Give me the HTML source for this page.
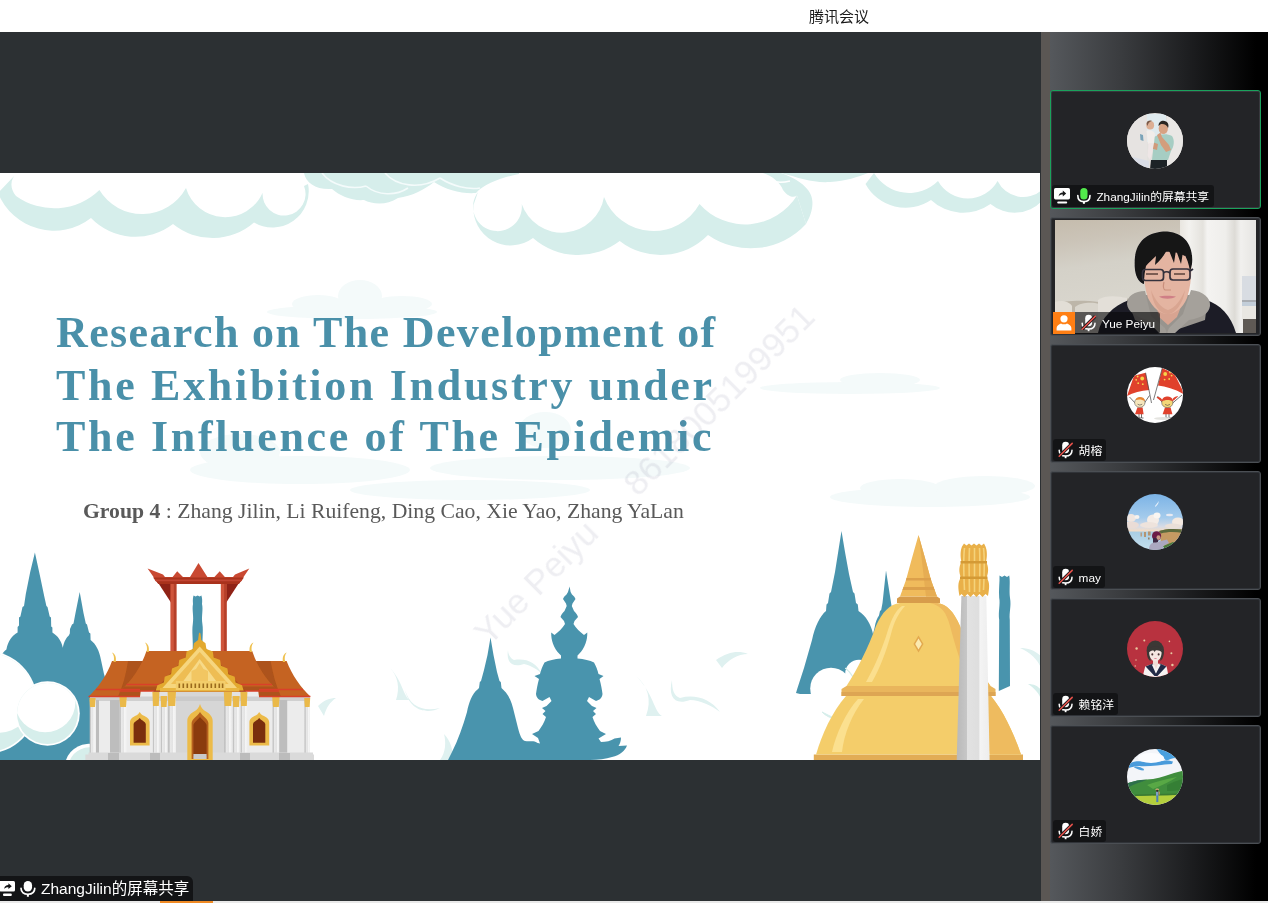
<!DOCTYPE html>
<html lang="zh">
<head>
<meta charset="utf-8">
<title>腾讯会议</title>
<style>
*{margin:0;padding:0;box-sizing:border-box}
.tag,#btag,#apptitle,.tl,#grp{will-change:transform}
html,body{width:1268px;height:903px;overflow:hidden;background:#fff}
body{position:relative;font-family:"Liberation Sans","Noto Sans CJK SC",sans-serif}
#topbar{position:absolute;left:0;top:0;width:1268px;height:32px;background:#fff}
#apptitle{position:absolute;left:809px;top:6.5px;font-size:15px;line-height:20px;color:#1a1a1a;white-space:nowrap;font-family:"Liberation Sans","Noto Sans CJK SC",sans-serif}
#main{position:absolute;left:0;top:32px;width:1041px;height:869px;background:#2c3033}
#slide{position:absolute;left:0;top:173px;width:1040px;height:587px;background:#fff;overflow:hidden}
#slide svg{position:absolute;left:0;top:0}
.tl{position:absolute;left:56px;white-space:nowrap;font-family:"Liberation Serif",serif;font-weight:bold;font-size:44px;line-height:50px;color:#4a90a9}
#t1{top:135.3px;letter-spacing:1.38px}
#t2{top:187.5px;letter-spacing:2.69px}
#t3{top:239.2px;letter-spacing:2.66px}
#grp{position:absolute;left:82.5px;top:325px;white-space:nowrap;font-family:"Liberation Serif",serif;font-size:21.7px;line-height:26px;color:#595959}
#grp b{font-weight:bold}
#wm{position:absolute;left:644px;top:301px;white-space:nowrap;font-size:35px;line-height:35px;color:rgba(120,120,155,.13);transform:translate(-50%,-50%) rotate(-45deg);font-family:"Liberation Sans",sans-serif;z-index:5}
#wm span{display:inline-block;width:53px}
#side{position:absolute;left:1041px;top:32px;width:227px;height:869px;background:linear-gradient(90deg,#55585c 0px,#55585c 9px,#3a3c3f 80px,#1c1d1f 150px,#000 215px)}
#strip{position:absolute;left:1041px;top:32px;width:9px;height:869px;background:#5b5754}
.tile{position:absolute;left:1050px;width:211px;height:119px;background:#232427;border:1px solid #4b4f54;border-radius:3px;overflow:hidden;box-shadow:inset 0 0 0 1px #303338}
.tile.act{border-color:#1aa25c;box-shadow:inset 0 0 0 1px #38373d}
.av{position:absolute;left:76px;top:22px;width:56px;height:56px;border-radius:50%;overflow:hidden}
.av svg{display:block}
.tag{position:absolute;left:2px;bottom:1px;height:22px;background:#131416;border-radius:3px;color:#fff;font-size:11.8px;line-height:24.6px;white-space:nowrap;padding:0 4px 0 25.6px;font-family:"Liberation Sans","Noto Sans CJK SC",sans-serif}
.tag svg{position:absolute;left:5px;top:2px}
#vid{position:absolute;left:4px;top:2px;width:201px;height:113px;overflow:hidden;background:#cfc8bb}
#vid svg{display:block}
#host{position:absolute;left:2px;top:94px;width:22px;height:22px}
#host svg{display:block}
#btag{position:absolute;left:0;top:876px;height:25px;width:193px;background:#131416;border-radius:0 6px 0 0;color:#fff;font-size:15.5px;line-height:26.4px;white-space:nowrap;padding-left:41px;overflow:hidden;font-family:"Liberation Sans","Noto Sans CJK SC",sans-serif}
#btag svg{position:absolute}
#bot{position:absolute;left:0;top:901px;width:1268px;height:2px;background:#e9e9e9}
#bot i{position:absolute;left:160px;top:0;width:53px;height:2px;background:#f08a24}
</style>
</head>
<body>
<div id="topbar"><div id="apptitle">腾讯会议</div></div>
<div id="main"></div>
<div id="slide">
<svg id="art" width="1041" height="587" viewBox="0 173 1041 587">
<defs>
<filter id="soft"><feGaussianBlur stdDeviation="0.5"/></filter>
<linearGradient id="gcol" x1="0" y1="0" x2="1" y2="0"><stop offset="0" stop-color="#bdbdbd"/><stop offset=".22" stop-color="#cfcfcf"/><stop offset=".24" stop-color="#e9e9e9"/><stop offset=".62" stop-color="#e3e3e3"/><stop offset=".64" stop-color="#f6f6f6"/><stop offset="1" stop-color="#f0f0f0"/></linearGradient>
</defs>
<g filter="url(#soft)">
<!-- faint mid clouds -->
<g fill="#f4fafa">
<ellipse cx="352" cy="312" rx="85" ry="7"/><ellipse cx="360" cy="296" rx="22" ry="16"/><ellipse cx="318" cy="304" rx="26" ry="9"/><ellipse cx="402" cy="304" rx="30" ry="8"/>
<ellipse cx="300" cy="470" rx="110" ry="14"/><ellipse cx="240" cy="452" rx="40" ry="18"/><ellipse cx="560" cy="468" rx="130" ry="12"/><ellipse cx="545" cy="430" rx="26" ry="18"/><ellipse cx="470" cy="490" rx="120" ry="10"/>
<ellipse cx="930" cy="497" rx="100" ry="10"/><ellipse cx="900" cy="488" rx="40" ry="9"/><ellipse cx="985" cy="486" rx="50" ry="10"/>
<ellipse cx="850" cy="388" rx="90" ry="6"/><ellipse cx="880" cy="380" rx="40" ry="7"/>
</g>
<!-- cloud B thin -->
<path d="M304 173 C306 183 316 190 332 189 C340 196 352 201 364 200 C372 204 386 206 398 198 C412 196 424 190 434 182 C446 190 462 194 476 193 C484 184 500 178 519 174 L519 173 Z" fill="#d6eeeb"/>
<path d="M322 173 C332 186 352 190 366 186 M366 186 C378 196 396 196 408 188 M385 173 C396 186 420 190 440 178 M440 178 C452 186 468 190 480 188" fill="none" stroke="#f4fbfb" stroke-width="1.6"/>
<!-- top scalloped clouds -->
<path d="M17 173C10 179 9.5 188 16 196A65 65 0 0 0 99.4 190.0A50.0 50.0 0 0 0 186.0 188.0A40.9 40.9 0 0 0 262.6 192.7A21.5 21.5 0 1 0 304.0 186.0L308.0 184.0A36.3 36.3 0 0 1 254.0 222.5A62.8 62.8 0 0 1 173.0 224.0A61.7 61.7 0 0 1 91.0 218.0A60.4 60.4 0 0 1 -2.0 193.0Z" fill="#d6eeeb"/>
<path d="M478.0 192.0A24.4 24.4 0 1 0 521.7 204.0A42.6 42.6 0 0 0 604.0 197.0A52.9 52.9 0 0 0 699.5 204.0A61.1 61.1 0 0 0 797.0 195.5L806.0 224.0A75.0 75.0 0 0 1 708.0 235.0A66.4 66.4 0 0 1 619.7 241.0A68.4 68.4 0 0 1 533.0 238.0A37.3 37.3 0 0 1 473.5 205.0Z" fill="#d6eeeb"/>
<path d="M874.0 173.0A40.9 40.9 0 0 0 938.0 181.0A34.2 34.2 0 0 0 997.6 181.0A28.5 28.5 0 0 0 1042.0 190.0L1042.0 201.0A38.0 38.0 0 0 1 990.5 204.0A46.9 46.9 0 0 1 931.0 200.0A45.5 45.5 0 0 1 865.5 184.0Z" fill="#d6eeeb"/>
<!-- cloud C curl -->
<path d="M763 173 C772 176 780 182 783 190 C790 200 797 196 797 195.500 L806 224 C812 214 816 200 808 190 C802 182 792 177 781 173 Z" fill="#d6eeeb"/>
<path d="M781 173 C800 178 812 183 830 182 C846 181 858 177 868 173 Z" fill="#d6eeeb"/>
<path d="M770 180 C776 183 782 183 790 181" fill="none" stroke="#fff" stroke-width="1.6"/>
</g>
<g filter="url(#soft)">
<!-- faint swooshes -->
<g fill="#dff1f0">
<path d="M318 706 C324 700 330 698 336 698 C330 702 326 708 324 716 Z"/>
<path d="M390 668 C398 676 400 688 396 700 L410 700 C404 698 402 680 390 668Z"/>
<path d="M405 690 C410 706 422 712 440 708 C428 714 410 712 405 690Z"/>
<path d="M636 676 C648 686 652 700 646 716 L662 716 C654 712 654 694 636 676Z"/>
<path d="M672 680 C668 696 674 706 690 700 C700 700 712 706 720 712 C710 698 694 694 680 698 C674 696 672 690 672 680Z"/>
<path d="M716 660 C728 652 738 650 748 654 C738 654 728 660 722 668Z"/>
<path d="M508 650 C506 662 512 668 524 664 C532 666 538 670 542 674 C536 662 526 658 514 660 C510 658 508 654 508 650Z"/>
<path d="M0 690 C4 700 4 712 0 722Z"/>
<path d="M444 734 C450 740 454 750 452 760 L440 760 C446 752 446 742 444 734Z"/>
<path d="M1020 648 C1030 652 1038 660 1041 668 L1041 656 C1034 650 1028 648 1020 648Z"/>
</g>
<!-- LEFT blue spires -->
<path d="M34.9 552.5 L39.8 575 L44.4 597 L46.4 606 L47.5 607 L49.7 616.5 L51 617.5 L51.2 626.500 L52.400 627.500 L52.4 632.500 C58 636 61.500 641 62.800 647.800 C64 641 67 637 68.800 635.500 L69.800 633.500 L70 629 L72 624.500 L73.500 623.500 L75.500 613 L79.700 592 L83.500 613 L85.800 623.500 L87 624.500 L89 632.500 L90.400 633.500 L90.600 640 C96 644 99.500 651 101 660 L104 674 L112 700 L120 760 L-2 760 L-2 664 C0 657 3 652 6.400 649.500 C8 641 12 635.500 17.600 632.500 L17.600 627 L19 625.500 L19 617.500 L20.400 616.500 L22.500 607 L24 606 L25.8 594 L30.2 572 Z" fill="#4a94ad"/>
<!-- bottom-left white cloud -->
<g>
<clipPath id="cc1"><circle cx="-14.3" cy="702.4" r="50"/></clipPath>
<clipPath id="cc2"><circle cx="47.5" cy="713.5" r="30.5"/></clipPath>
<circle cx="-14.3" cy="702.4" r="51.6" fill="#fff"/>
<circle cx="-14.3" cy="702.4" r="50" fill="#d6eeeb"/>
<circle cx="-2.8" cy="695.5" r="37.5" fill="#fff" clip-path="url(#cc1)"/><rect x="-2" y="640" width="44" height="62" fill="#fff" clip-path="url(#cc1)"/>
<circle cx="47.5" cy="713.5" r="32.3" fill="#fff"/>
<circle cx="47.5" cy="713.5" r="30.5" fill="#d6eeeb"/>
<circle cx="45.2" cy="702.1" r="30.2" fill="#fff" clip-path="url(#cc2)"/>
<path d="M66 760 A24 24 0 0 1 96 745 L96 760Z" fill="#fff"/>
<path d="M70 760 A21 21 0 0 1 96 748.5 L96 760Z" fill="#d6eeeb"/>
</g>
</g>
<g filter="url(#soft)">
<!-- giant swing -->
<g>
<path d="M192.6 652 C193.4 640 191.6 632 192.8 624 C194 616 191.8 610 193 604 C192.6 600 193 597 193.6 595.6 L195.6 596.4 L197.6 595.6 L199.6 596.4 L201.4 595.6 C202.2 598 202.4 601 202 604 C203.4 610 201.2 616 202.4 624 C203.600 632 201.8 640 202.8 652 Z" fill="#4a94ad"/>
<path d="M158.6 583.5 H171.6 V603.5 Z" fill="#8f2013"/>
<path d="M238.6 583.5 H225.6 V603.5 Z" fill="#8f2013"/>
<rect x="170.4" y="583" width="6" height="68" fill="#cf553b"/>
<rect x="173.8" y="583" width="2.6" height="68" fill="#b5402a"/>
<rect x="220.8" y="583" width="5.8" height="68" fill="#cf553b"/>
<rect x="224.2" y="583" width="2.4" height="68" fill="#b5402a"/>
<path d="M147.600 568.400 L163 574.500 L165 577 L172.600 577 L177.200 571.300 L183 577 L190 577 L198.500 563 L207.400 577 L214.400 577 L219.700 571.300 L224.900 577 L233 577 L235 574.500 L249.300 568.400 L238.800 584 H158.400 Z" fill="#c94a33"/>
<path d="M153 577.500 H244 L238.800 584 H158.400 Z" fill="#a9321f"/>
<path d="M154.500 579.600 H242.500 L241.300 581.200 H155.600Z" fill="#c24530"/>
</g>
<!-- temple walls -->
<g>
<rect x="90" y="696" width="220" height="58" fill="#ececec"/><rect x="121" y="690" width="158" height="10" fill="#ececec"/>
<rect x="155" y="690" width="90" height="64" fill="#e2e2e2"/>
<rect x="176" y="692" width="48" height="62" fill="#d6d6d6"/>
<!-- shadows under roof -->
<rect x="90" y="696.5" width="220" height="4.5" fill="#c4c4c4" opacity=".7"/>
<!-- pillars -->
<g fill="url(#gcol)">
<rect x="89.7" y="700" width="6" height="54"/><rect x="119.7" y="700" width="7" height="54"/>
<rect x="152.9" y="698" width="6.4" height="56"/><rect x="161" y="698" width="6" height="56"/><rect x="168" y="698" width="7.8" height="56"/>
<rect x="224" y="698" width="7.6" height="56"/><rect x="233" y="698" width="6.4" height="56"/><rect x="240.8" y="698" width="6.4" height="56"/>
<rect x="272.6" y="700" width="6.6" height="54"/><rect x="304.5" y="700" width="5.4" height="54"/>
</g>
<g fill="#bdbdbd"><rect x="110" y="700" width="9.7" height="54"/><rect x="279.2" y="700" width="8" height="54"/><rect x="96" y="700" width="3" height="54"/></g>
<!-- gold capitals -->
<g fill="#eab94a">
<path d="M89.4 698 h6.2 l-.6 9 h-5z"/><path d="M119.4 697 h7.4 l-.8 10 h-5.8z"/><path d="M152.4 692 h7 l-.6 14 h-5.8z"/><path d="M160.6 696 h6.6 l-.6 11 h-5.400z"/><path d="M167.600 692 h8.400 l-.8 14 h-6.800z"/>
<path d="M223.800 692 h8.200 l-.8 14 h-6.600z"/><path d="M232.600 696 h7 l-.6 11 h-5.800z"/><path d="M240.400 692 h7 l-.6 14 h-5.800z"/><path d="M272.200 697 h7.400 l-.8 10 h-5.800z"/><path d="M304.200 698 h6 l-.6 9 h-4.800z"/>
</g>
<!-- plinth -->
<path d="M85.400 760 V754.500 H88.500 V752.500 H313 V754.500 H314 V760 Z" fill="#dadada"/>
<path d="M108 760 V753 H119 V760Z M150 760 V753 H160 V760Z M240 760 V753 H250 V760Z M279 760 V753 H290 V760Z" fill="#bcbcbc"/>
<!-- windows -->
<g>
<path d="M130 745.500 V722 C130 719 133 717 135 716 C137.500 715 139 713.500 139.700 712 C140.400 713.500 142 715 144.500 716 C146.500 717 149.600 719 149.600 722 V745.500 Z" fill="#ecbb4a"/>
<path d="M133.600 742.800 V724 C134 721.500 138 720.500 139.700 718 C141.400 720.500 145.400 721.500 145.800 724 V742.800 Z" fill="#7a2f10"/>
<path d="M249.400 745.500 V722 C249.400 719 252.400 717 254.400 716 C257 715 258.500 713.500 259.200 712 C259.900 713.500 261.400 715 264 716 C266 717 269.200 719 269.200 722 V745.500 Z" fill="#ecbb4a"/>
<path d="M253 742.800 V724 C253.400 721.500 257.500 720.500 259.200 718 C260.900 720.500 264.900 721.500 265.300 724 V742.800 Z" fill="#7a2f10"/>
</g>
<!-- door -->
<path d="M187.300 760 V721 C187.300 716.500 191 713 194 711.500 C197 710 199 707.500 200 704 C201 707.500 203 710 206 711.500 C209 713 212.700 716.500 212.700 721 V760 Z" fill="#ecbb4a"/>
<path d="M191.600 759 V723 C192 718.500 197.500 716.500 200 712 C202.500 716.500 208 718.500 208.400 723 V759 Z" fill="#b5611f"/>
<path d="M193.400 756 V725 C194 722 198 720 200 717 C202 720 206 722 206.600 725 V756 Z" fill="#8a3a10"/>
<rect x="193.400" y="754" width="13.200" height="5" fill="#c9c9c9"/>
</g>
<!-- roofs -->
<g>
<!-- left lower roof -->
<path d="M112 661 H143 L140 696.500 H88.600 C98 688 107 675 112 661Z" fill="#c56323"/>
<path d="M286.600 661 H256 L259 696.500 H310.400 C301 688 292 675 286.600 661Z" fill="#c56323"/>
<path d="M128 661 H143 L140 696.500 H118 C123 686 126 674 128 661Z" fill="#ad531a"/>
<path d="M270.600 661 H256 L259 696.500 H281 C276 686 273 674 270.600 661Z" fill="#ad531a"/>
<!-- center upper roof -->
<path d="M146.500 651 H252.200 C257 666 266 680 278.500 691 H120 C132.500 680 141.500 666 146.500 651Z" fill="#c56323"/>
<path d="M120 691 L124.500 686.500 H274 L278.500 691Z" fill="#ad531a"/>
<g stroke="#d9402a" stroke-width="1.300" fill="none">
<path d="M126.500 684.500 H272"/><path d="M119.500 691 H279"/><path d="M88.600 696.500 H140"/><path d="M259 696.500 H310.400"/><path d="M96 689.500 H140"/><path d="M259 689.500 H303"/>
</g>
<!-- finials -->
<g fill="#efc14f">
<path d="M146.500 652 C147.500 648 147 645 145 642.500 C148 643.500 149.500 647 148.800 652Z"/>
<path d="M252 652 C251 648 251.500 645 253.500 642.500 C250.500 643.500 249 647 249.700 652Z"/>
<path d="M113.500 662 C114.500 658 114 655 112 652.500 C115 653.500 116.500 657 115.800 662Z"/>
<path d="M285.200 662 C284.200 658 284.700 655 286.700 652.500 C283.700 653.500 282.200 657 282.900 662Z"/>
</g>
<!-- center gable -->
<path d="M199.700 641.500 L246.500 692 H153 Z" fill="#9c4a14" opacity=".55"/>
<path d="M199.7 632.5 L200.5 633.5 L201.3 640.0 L205.5 643.2 L206.4 649.0 L212.8 651.6 L213.7 657.4 L220.1 660.0 L221.0 665.8 L227.4 668.4 L228.3 674.2 L234.7 676.8 L235.5 682.6 L242.0 685.2 L243.6 690.6 L155.8 690.6 L157.4 685.2 L163.9 682.6 L164.7 676.8 L171.1 674.2 L172.0 668.4 L178.4 665.8 L179.3 660.0 L185.7 657.4 L186.6 651.6 L193.0 649.0 L193.9 643.2 L198.1 640.0 L198.9 633.5Z" fill="#e3a92f"/>
<path d="M199.700 646.500 L237.500 688.500 H162 Z" fill="#f6d67e"/>
<path d="M199.700 652 L228.500 684 H171 Z" fill="#eebd52"/>
<path d="M199.700 659 L216.500 681.500 H183 Z" fill="#f7da88"/>
<path d="M199.700 663 L203.500 669 L208 671 L208 681.500 H191.500 V671 L196 669 Z" fill="#f2c662"/>
<rect x="160" y="688" width="79.400" height="3.600" fill="#e9b640"/>
<rect x="175.800" y="681" width="49.700" height="9" fill="#f3cd6a"/>
<g fill="#9a6a1c"><rect x="178.500" y="683.500" width="1.600" height="4.500"/><rect x="182.500" y="683.500" width="1.600" height="4.500"/><rect x="186.500" y="683.500" width="1.600" height="4.500"/><rect x="190.500" y="683.500" width="1.600" height="4.500"/><rect x="194.500" y="683.500" width="1.600" height="4.500"/><rect x="198.500" y="683.500" width="1.600" height="4.500"/><rect x="202.500" y="683.500" width="1.600" height="4.500"/><rect x="206.500" y="683.500" width="1.600" height="4.500"/><rect x="210.500" y="683.500" width="1.600" height="4.500"/><rect x="214.500" y="683.500" width="1.600" height="4.500"/><rect x="218.500" y="683.500" width="1.600" height="4.500"/><rect x="221.800" y="683.500" width="1.600" height="4.500"/></g>
</g>
</g>
<defs>
<linearGradient id="gcol2" x1="0" y1="0" x2="1" y2="0"><stop offset="0" stop-color="#b9b9b9"/><stop offset=".3" stop-color="#c6c6c6"/><stop offset=".32" stop-color="#e2e2e2"/><stop offset=".68" stop-color="#dedede"/><stop offset=".7" stop-color="#f4f4f4"/><stop offset="1" stop-color="#ededed"/></linearGradient>
</defs>
<g filter="url(#soft)">
<!-- middle spire + figure -->
<path d="M490.500 637.500 L493.500 655 L497 672 L499.500 681 L500.800 682 L501.500 688 L503 689.500 C508 694 511 700 513 708 L518 728 C520 736 522 740 525 741 C530 742 534 740 537 743 L540 746 L534 760 L448 760 L452 752 C458 740 463 726 467 712 C469 702 472 694 477.500 689.500 L479 688 L479.800 682 L481 681 L484 670 L487.500 655 Z" fill="#4a94ad"/>
<path d="M569.600 586.500 L570.600 592 L572 594.500 C574 596 575 597.500 575.500 599 L572.500 603.500 L571.800 606 L574 611 C576 613 577.500 615 578 617 L574.500 621 L573.500 624 C576 628 580 632 584 635 L587.300 632.500 C587.500 640 585 648 579 654 L577.500 655.500 L577.500 658.500 C584 659 590 660.500 594 662.500 C596 666 597.500 670 598.500 674 L603.500 676 L599.500 679 C601 684 602 690 602.500 694 C602 698 599.500 700 596 701 L589 697 L587 701 L592 706 L596.500 708 L593 711 L596 714 L592.500 717 C594 722 597 727 600 731 L606 734 L598.500 738.500 L601 742 C606 742 611 741 614.500 738.500 L621 737.500 C621 741 620 744 618.500 746 L627 745.500 C625 751 620 755 612 757 C606 759 598 760 590 760 L540 760 L536 752 C534 748 533.500 745 534 742 L540 743.500 L538 738 L532 734 L538.500 731 C541.500 727 544.500 722 546 717 L542.500 714 L545.500 711 L542 708 L546.500 706 L551.500 701 L549.500 697 L542.500 701 C539 700 536.500 698 536 694 C536.500 690 537.500 684 539 679 L534.500 676 L540 674 C541 670 542.500 666 544.500 662.500 C548.500 660.500 554.500 659 561 658.500 L561 655.500 L559.500 654 C553.500 648 551 640 551.200 632.500 L554.500 635 C558.500 632 562.500 628 565 624 L564 621 L560.500 617 C561 615 562.500 613 564.500 611 L566.700 606 L566 603.500 L563 599 C563.500 597.500 564.500 596 566.500 594.500 L568 592 Z" fill="#4a94ad"/>
<rect x="518" y="746" width="30" height="14" fill="#4a94ad"/>
<!-- right blue spires -->
<path d="M841.500 531 L845 552 L849 574 L853 592 L854.500 593.500 L856 603 L857.800 604.500 L858.500 611 C866 616 871 624 873 634 L874.500 628 C875.500 622 877 618 879 615.500 L880 611 L881.200 610 L882.500 603 L886 570.500 L890 596 L892 609 L893.500 610.500 L894.500 616 C900 620 903 626 905 634 L915 700 L870 700 L800 694 L796 693 L797.500 688 L804 668 L812 640 C815 626 820 616 826 611 L826.500 604.500 L828 603 L829.500 593.500 L831 592 L835 572 Z" fill="#4a94ad"/>
<!-- blue pillar right -->
<path d="M999.500 575.500 L1002 577 L1004.500 575.500 L1007 577 L1009.200 575.500 C1010.500 582 1009 590 1010 598 C1011.500 606 1009 612 1009.800 620 L1010 686 L998.800 691 L999.200 620 C998 612 1000.500 604 999.200 598 C998.500 590 999.800 582 999.500 575.500Z" fill="#4a94ad"/>
<!-- clouds at stupa foot -->
<circle cx="831" cy="688.5" r="20.8" fill="#fff"/><circle cx="859" cy="673.5" r="13.8" fill="#fff"/><rect x="796" y="694" width="90" height="30" fill="#fff"/>
<path d="M845 668 C850 672 854 678 856 684 C853 676 850 671 845 668Z" fill="#d6eeeb" stroke="#d6eeeb" stroke-width="1"/>
<path d="M822 712 C826 716 830 718 836 719 C830 716 826 714 822 712Z" fill="#d6eeeb" stroke="#d6eeeb" stroke-width="1"/>
<circle cx="1030" cy="715" r="32" fill="#fff"/>
<path d="M1028 684 C1034 688 1040 694 1041 700 L1041 690 C1038 686 1034 684 1028 684Z" fill="#d6eeeb"/>
<!-- stupa -->
<g>
<path d="M813.800 760 V754.500 H1023 V760Z" fill="#e2ac55"/>
<path d="M816 754.500 C822 734 832 712 846 696 H991 C1004 712 1014 734 1021 754.500Z" fill="#f4cd6b"/>
<path d="M962 696 H991 C1004 712 1014 734 1021 754.500 H990 C986 734 976 712 962 696Z" fill="#eebb5e"/>
<path d="M832 752 C836 734 846 712 858 699 L864 699 C852 714 844 734 842 752Z" fill="#fbe08f"/>
<path d="M841.500 696 V689 L846.500 686 H990.500 L995.500 689 V696Z" fill="#e9b55c"/>
<path d="M841.500 692 H995.500 V696 H841.500Z" fill="#dda552"/>
<path d="M846.500 686 C858 668 868 648 876 626 C882 612 890 604 900 603 H937 C947 604 954 612 960 626 C968 648 978 668 990.500 686Z" fill="#f4cd6b"/>
<path d="M937 603 C947 604 954 612 960 626 C968 648 978 668 990.500 686 H970 C962 668 956 648 950 626 C946 612 942 606 930 603Z" fill="#eeba5e"/>
<path d="M866 682 C874 668 882 650 888 630 C892 618 896 610 902 606 L905 606 C898 614 894 622 891 634 C886 652 880 668 872 682Z" fill="#fbdf8e"/>
<path d="M897 603 V598.500 L900 596.500 H937 L940 598.500 V603Z" fill="#d79c4c"/>
<path d="M900 596.500 L906 580 L912 558 L918.500 535 L925 558 L931 580 L937 596.500Z" fill="#f0bb5c"/>
<path d="M918.500 535 L925 558 L931 580 L937 596.500 H926 C924 580 922 558 918.500 535Z" fill="#e6ad52"/>
<path d="M903.500 587 H933.500 L934.500 590 H902.500Z M906.500 578 H930.500 L931.300 580.500 H905.800Z" fill="#dca04c"/>
<path d="M918.500 635.500 L923.500 644 L918.500 652.500 L913.500 644Z" fill="#e2a94f"/>
<path d="M918.500 638.500 L921.800 644 L918.500 649.500 L915.200 644Z" fill="#fbeab0"/>
</g>
<!-- column -->
<g>
<path d="M961.400 596 H986.300 L989.600 760 H956.700Z" fill="url(#gcol2)"/>
<path d="M959.500 596 C958 588 957.500 582 961 577.500 C958.500 572 959 566 961.500 562 C960 556 960.500 550 962 546.500 L964 543.500 L966.500 545.500 L969 543.500 L971.500 545.500 L974 543.500 L976.500 545.500 L979 543.500 L981.500 545.500 L984 543.500 L985.500 546.500 C987 550 987.500 556 986 562 C988.500 566 989 572 986.500 577.500 C990 582 989.500 588 988 596 L985.500 594 L982.500 597 L979.500 594 L976.500 597 L973.500 594 L970.500 597 L967.500 594 L964.500 597 L961.500 594Z" fill="#e9b048"/>
<path d="M964.500 548 C963.500 556 963.500 570 964.500 590 M969.500 548 C969 556 969 570 969.500 592 M974.500 548 C974.500 556 974.500 570 974.500 592 M979.500 548 C980 556 980 570 979.500 592 M983.500 548 C984.500 556 984.500 570 983.500 590" stroke="#f5d27a" stroke-width="1.600" fill="none"/>
<path d="M960.500 561 H987 V563.500 H960.500Z M960 576.500 H987.500 V579 H960Z" fill="#d49a36"/>
</g>
</g>

</svg>
<div class="tl" id="t1">Research on The Development of</div>
<div class="tl" id="t2">The Exhibition Industry under</div>
<div class="tl" id="t3">The Influence of The Epidemic</div>
<div id="grp"><b>Group 4</b> : Zhang Jilin, Li Ruifeng, Ding Cao, Xie Yao, Zhang YaLan</div>
<div id="wm">Yue Peiyu<span></span>8618005199951</div>
</div>
<div id="side"></div>
<div id="strip"></div>
<svg width="0" height="0" style="position:absolute">
<defs>
<g id="micoff">
<rect x="4.2" y="0.8" width="6.9" height="11.4" rx="3.45" fill="#fff"/>
<path d="M1.2 9.2 C1.2 13 4 15 7.6 15 C11.2 15 14 13 14 9.2" fill="none" stroke="#fff" stroke-width="1.5" stroke-linecap="round"/>
<path d="M7.6 15 V17.2" stroke="#fff" stroke-width="1.8"/>
<path d="M1.2 15.2 L14.2 2.4" stroke="#17181a" stroke-width="3.2"/>
<path d="M1.2 15.2 L14.2 2.4" stroke="#e8524b" stroke-width="1.5" stroke-linecap="round"/>
</g>
<g id="micon">
<rect x="3.3" y="0" width="7.2" height="11.6" rx="3.6" fill="#52e94c"/>
<path d="M0.8 7.5 C0.8 12 3.5 13.6 6.9 13.6 C10.3 13.6 13 12 13 7.5" fill="none" stroke="#fff" stroke-width="1.6" stroke-linecap="round"/>
<path d="M6.9 13.6 V15.8" stroke="#fff" stroke-width="2"/>
</g>
<g id="share">
<rect x="0" y="0" width="16" height="11.4" rx="1.6" fill="#fff"/>
<rect x="3.2" y="13.4" width="10" height="2.1" rx="1" fill="#fff"/>
<path d="M4.6 8.6 C4.8 5.6 6.6 4.5 8.8 4.5 V2.6 L12.2 5.6 L8.8 8.4 V6.6 C7 6.5 5.6 7 4.6 8.6Z" fill="#17181a"/>
</g>
</defs>
</svg>

<!-- tile 1 -->
<div class="tile act" style="top:90px">
<div class="av"><svg width="56" height="56" viewBox="0 0 56 56">
<defs><filter id="b1"><feGaussianBlur stdDeviation="0.75"/></filter></defs>
<rect width="56" height="56" fill="#e3e1de"/>
<g filter="url(#b1)">
<rect x="20" y="1" width="19" height="28" fill="#dfeaee"/>
<rect x="0" y="0" width="20" height="56" fill="#e6e3e1"/>
<rect x="40" y="0" width="16" height="56" fill="#e9e7e5"/>
<path d="M13 21 l3 1 l0.5 6 l-3 -1z" fill="#7aa3b8"/>
<path d="M6 44 L22 48 L22 56 L4 56Z" fill="#d9dde6"/>
<!-- man -->
<path d="M27 24 C31 21 40 20 45 23 C48 27 47 34 44 38 L41 47 L25 47 L26 38 Z" fill="#a6cdc3"/>
<path d="M24 47 H40 V56 H23 Z" fill="#1f2226"/>
<ellipse cx="36.3" cy="15.5" rx="4.6" ry="5.6" fill="#d7a283"/>
<path d="M31.5 13 C31.5 8 36 7 39 8.5 C41.5 9.5 42 13 41 15 C40 12 37 10.5 34 11 Z" fill="#2b2521"/>
<path d="M30 22 L33.5 19.5 L35 24 L42 32 L44 37 L39 39 L34 32 Z" fill="#d39d7c"/>
<path d="M22 28 L31 31 L30 37 L23 35Z" fill="#d09a7a"/>
<!-- baby -->
<ellipse cx="23.2" cy="12.2" rx="3.9" ry="4.2" fill="#dcae93"/>
<path d="M19.6 11 C19.6 7.5 23 7 25 8 C23 8.6 21 10 20.4 13Z" fill="#7a5a48"/>
<path d="M19.5 18 C22 16.5 27 17.5 28 21 L27 30 L21 31 Z" fill="#f1edea"/>
<path d="M21.5 30 L27 30 L25 41 L23 47 L20.5 43 Z" fill="#eee6e6"/>
</g>
</svg></div>
<div class="tag t1" style="left:1px;bottom:1px;padding-left:44.4px;padding-right:5px"><svg width="16" height="16" viewBox="0 0 16 16" style="left:2px;top:3px"><use href="#share"/></svg><svg width="14" height="16" viewBox="0 0 14 16" style="left:24.6px;top:3px"><use href="#micon"/></svg>ZhangJilin的屏幕共享</div>
</div>

<!-- tile 2 : video -->
<div class="tile" style="top:217px">
<div id="vid"><svg width="201" height="113" viewBox="0 0 201 113">
<defs>
<filter id="vb"><feGaussianBlur stdDeviation="0.75"/></filter>
<filter id="vb2"><feGaussianBlur stdDeviation="1.6"/></filter>
<linearGradient id="wall" x1="0" y1="0" x2="0.25" y2="1"><stop offset="0" stop-color="#c5bcad"/><stop offset=".2" stop-color="#cbc4b8"/><stop offset=".42" stop-color="#d4d1c8"/><stop offset="1" stop-color="#dcd9d1"/></linearGradient>
<linearGradient id="curt" x1="0" y1="0" x2="1" y2="0"><stop offset="0" stop-color="#e9e6e0"/><stop offset=".12" stop-color="#f3f2ef"/><stop offset=".3" stop-color="#e4e2dd"/><stop offset=".36" stop-color="#f4f3f1"/><stop offset=".6" stop-color="#efeeeb"/><stop offset=".72" stop-color="#dddbd6"/><stop offset=".8" stop-color="#f1f0ee"/><stop offset="1" stop-color="#e6e5e2"/></linearGradient>
</defs>
<rect width="201" height="113" fill="url(#wall)"/>
<g filter="url(#vb)">
<rect x="125" y="0" width="76" height="113" fill="url(#curt)"/>
<rect x="187" y="56" width="14" height="26" fill="#d8dce2"/>
<rect x="187" y="80" width="14" height="2" fill="#a9adb2"/><rect x="187" y="82" width="14" height="8" fill="#c3ced9"/>
<rect x="187" y="86" width="14" height="14" fill="#e9e7e2"/>
<rect x="188" y="99" width="13" height="14" fill="#5f5a55"/>
<!-- sofa -->
<path d="M0 84 C10 80 30 80 44 82 C52 76 64 76 74 79 V113 H0Z" fill="#bdb6a9"/>
<path d="M0 82 C6 80 14 81 17 86 V113 H0Z" fill="#e2ded6"/>
<path d="M20 87 C26 82 38 82 44 84 V113 H20Z" fill="#d9d5cc"/>
<path d="M43 80 C50 75 62 76 72 78 V113 H43Z" fill="#e3dfd8"/>
<path d="M0 100 H60 V113 H0Z" fill="#cfcac1" opacity=".6"/>
<!-- jacket -->
<path d="M43 113 C46 98 58 86 74 80 L100 96 L112 110 L124 96 L150 80 C166 84 176 96 181 113Z" fill="#1c1d27"/>
<!-- hood -->
<path d="M78 75 L148 75 L152 84 L150 100 L112 113 L80 100 L74 84Z" fill="#98948e"/>
<path d="M72 84 C72 76 80 71 90 71 L96 96 L110 108 L112 113 L104 113 L92 100 C80 96 73 92 72 84Z" fill="#a19d97"/>
<path d="M155 86 C156 78 148 71 136 70 L128 94 L114 108 L112 113 L120 113 L134 100 C146 98 154 94 155 86Z" fill="#a5a19b"/>
<!-- neck -->
<path d="M101 84 H127 L122 97 L113 105 L104 97Z" fill="#d8a491"/>
<!-- face -->
<path d="M89 40 C89 24 100 18 113 18 C126 18 136 24 136 40 C137 52 136 66 132 78 C128 88 120 94 113 94 C105 94 98 88 93 78 C89 66 88 52 89 40Z" fill="#e4b4a1"/>
<path d="M96 70 C100 80 106 88 113 90 C120 88 126 80 130 70 C128 84 120 94 113 94 C105 94 98 86 96 70Z" fill="#d9a591"/>
<!-- hair -->
<path d="M80 50 C78 30 84 14 108 11.5 C128 11 139 24 137 44 L135 52 C134 44 132 38 128 32 L126 44 L121 30 L119 43 L113 28 C110 34 106 40 100 45 L101 36 C97 40 93 43 91 46 C90 50 89 56 89 64 C85 63 81 58 80 50Z" fill="#131316"/>
<path d="M92 30 C100 24 120 22 132 30 L130 36 C120 30 104 30 94 38Z" fill="#131316"/>
<!-- glasses -->
<g fill="none" stroke="#35313c" stroke-width="1.700">
<rect x="87.500" y="49.500" width="21" height="11" rx="3"/><rect x="115" y="49" width="20" height="11" rx="3"/><path d="M108.500 53 C110 51.500 113 51.500 115 53"/>
</g>
<path d="M135 51 L138 49" stroke="#2b2c3a" stroke-width="2"/>
<path d="M91 54 h12 M119 54 h11" stroke="#5a4038" stroke-width="1.400"/>
<!-- nose + mouth -->
<path d="M109 62 C108 66 108 69 110 70 H116" stroke="#c98f7c" stroke-width="1.200" fill="none"/>
<path d="M104 76.500 C108 75.500 116 75.500 121 76.500 C117 79.500 108 79.500 104 76.500Z" fill="#cf7f86"/>
</g>
</svg>
</div>
<div id="host"><svg width="22" height="22" viewBox="0 0 22 22"><rect width="22" height="22" fill="#ff7f14"/><circle cx="11" cy="6.8" r="3.6" fill="#fff"/><path d="M3.6 18.6 V16 C3.6 13.6 6 12 8 11.4 C9.6 12.6 12.4 12.6 14 11.4 C16 12 18.4 13.6 18.4 16 V18.6 Z" fill="#fff"/></svg></div>
<div class="tag" style="left:24px;bottom:1px;background:rgba(10,10,12,.62);border-radius:0 3px 3px 0;padding-left:27px;padding-right:5px"><svg width="16" height="18" viewBox="0 0 16 18" style="left:6px;top:2px"><use href="#micoff"/></svg>Yue Peiyu</div>
</div>

<!-- tile 3 -->
<div class="tile" style="top:344px">
<div class="av"><svg width="56" height="56" viewBox="0 0 56 56">
<rect width="56" height="56" fill="#fff"/>
<path d="M0 29 L7 8.7 L18.6 5.8 L22.2 23 C14 23.5 6 26 0 29Z" fill="#e0412c"/>
<path d="M35.3 1 L47.5 7 L55 22 L56.5 27 C48 22 39 19.5 31 18.5Z" fill="#e0412c"/>
<path d="M18.6 5.8 L24.5 36" stroke="#444" stroke-width=".7" fill="none"/>
<path d="M35.3 1 L26.5 33" stroke="#444" stroke-width=".7" fill="none"/>
<g fill="#f6d44a">
<circle cx="15.2" cy="11.5" r="1.9"/><circle cx="10.6" cy="9.5" r=".9"/><circle cx="9.2" cy="12.8" r=".9"/><circle cx="11.2" cy="16.2" r=".9"/><circle cx="15.8" cy="17.2" r=".9"/>
<circle cx="38.2" cy="7" r="1.9"/><circle cx="43" cy="5.4" r=".9"/><circle cx="44.6" cy="8.6" r=".9"/><circle cx="42.2" cy="12" r=".9"/><circle cx="37.6" cy="12.6" r=".9"/>
</g>
<g stroke="#333" stroke-width=".7" fill="none">
<path d="M10 38 L2.5 30"/><path d="M16 38 L22.5 28.5"/><path d="M36.5 37 L30.5 29"/><path d="M44.5 37 L55 28"/>
<path d="M12 47 V51 h2"/><path d="M14.5 47 V51 h2"/><path d="M39 47 V51 h2"/><path d="M42 47 V51 h2"/>
</g>
<ellipse cx="36" cy="51.5" rx="9" ry="1.4" fill="#e4e4e0"/>
<path d="M10.4 40.6 H15.6 L16.6 47.2 H8 Z" fill="#e0412c"/>
<path d="M38 40.4 H43.6 L45.4 47.2 H35.6 Z" fill="#e0412c"/>
<ellipse cx="12.8" cy="35.6" rx="5.2" ry="4.8" fill="#f6e6bc" stroke="#444" stroke-width=".5"/>
<path d="M8.6 33 C9.5 30 13 29.6 15.5 30.6 C17 31.2 17.8 32.6 18 34 C15 32.4 12 32 8.6 33Z" fill="#e98530"/>
<ellipse cx="40.3" cy="35.8" rx="5.6" ry="4.8" fill="#f3d778" stroke="#444" stroke-width=".5"/>
<path d="M34.6 34.6 C35 30.6 38.6 29.4 41 29.6 C44 29.8 46 31.6 46.2 34.6 C43 32.6 38 32.6 34.6 34.6Z" fill="#e0412c"/>
<path d="M35 32.5 C33 30 31 29.6 29.5 30.5 C31 31.6 33 33.4 34.6 34.2Z" fill="#e0412c"/>
<path d="M45.6 32 C47.5 29.6 49.6 28.8 51.2 29.4 C49.6 30.8 47.6 32.6 46.2 33.8Z" fill="#e0412c"/>
<path d="M10.6 37.2 q2.2 1.8 4.6 0" stroke="#444" stroke-width=".6" fill="none"/>
<path d="M38 37.4 q2.4 2 5 0" stroke="#444" stroke-width=".6" fill="none"/>
</svg></div>
<div class="tag"><svg width="16" height="18" viewBox="0 0 16 18"><use href="#micoff"/></svg>胡榕</div>
</div>

<!-- tile 4 -->
<div class="tile" style="top:471px">
<div class="av"><svg width="56" height="56" viewBox="0 0 56 56">
<defs><linearGradient id="sky4" x1="0" y1="0" x2="0" y2="1"><stop offset="0" stop-color="#7bb3e6"/><stop offset=".42" stop-color="#a4cbec"/><stop offset=".58" stop-color="#d6dbe6"/><stop offset=".66" stop-color="#f3dcc6"/><stop offset=".68" stop-color="#a9cde3"/><stop offset="1" stop-color="#c5e0ee"/></linearGradient>
<filter id="b4"><feGaussianBlur stdDeviation="0.6"/></filter></defs>
<rect width="56" height="56" fill="url(#sky4)"/>
<g filter="url(#b4)">
<ellipse cx="26" cy="26" rx="6" ry="5.5" fill="#f4ece6"/><ellipse cx="30" cy="21.5" rx="3.5" ry="3" fill="#faf6f2"/>
<ellipse cx="22" cy="31" rx="9" ry="3" fill="#eee3dc"/>
<ellipse cx="4" cy="24" rx="5" ry="4" fill="#f0e6e0"/><ellipse cx="10" cy="23" rx="2.5" ry="2" fill="#f7f2ee"/>
<ellipse cx="4" cy="31" rx="8" ry="3.5" fill="#eadcd6"/>
<ellipse cx="51" cy="28" rx="6" ry="4.5" fill="#f4e9e0"/><ellipse cx="46" cy="32" rx="8" ry="2.5" fill="#eadfd8"/>
<ellipse cx="42.5" cy="21" rx="3.5" ry="1.2" fill="#e8eaf2"/>
<path d="M28 12 l4 -5 l-1 3 l-2.4 3z" fill="#e9f1fa"/>
<path d="M32 37 C38 34.5 48 34.5 56 35.5 V52 L40 56 L34 48 Z" fill="#c59a63"/>
<path d="M32 37 C38 34.5 48 34.5 56 35.5 V39 C48 37.5 40 37.5 34 39.5Z" fill="#5b6a3c"/>
<path d="M36 52 L46 48 L52 50 L44 56 H38Z" fill="#4c7a3c"/>
<rect x="13.5" y="38.5" width="1.4" height="4" fill="#b89a7a"/><rect x="17" y="38" width="2" height="5" fill="#b5946f"/><rect x="21" y="37.5" width="2.6" height="4" fill="#b5946f"/><rect x="21" y="43.5" width="1.6" height="2" fill="#9a8066"/>
<ellipse cx="29.6" cy="42" rx="4.6" ry="4.8" fill="#6c1f47"/>
<path d="M26 44 h5 v8 h-5z" fill="#3c2a44"/>
<ellipse cx="31.5" cy="43.6" rx="2" ry="2.4" fill="#c99a86"/>
<path d="M22 56 C22 50 25 48 29 48.5 L34 47 L40 45.5 L42 49 L36 52 V56Z" fill="#aba8c0"/>
</g>
</svg></div>
<div class="tag"><svg width="16" height="18" viewBox="0 0 16 18"><use href="#micoff"/></svg>may</div>
</div>

<!-- tile 5 -->
<div class="tile" style="top:598px">
<div class="av"><svg width="56" height="56" viewBox="0 0 56 56">
<defs><filter id="b5"><feGaussianBlur stdDeviation="0.35"/></filter></defs>
<rect width="56" height="56" fill="#b8323f"/>
<g filter="url(#b5)">
<g fill="#e8c9a0"><circle cx="17.3" cy="19.6" r="1"/><circle cx="9.6" cy="27.5" r="1.2"/><circle cx="42.4" cy="20.4" r=".8"/><circle cx="44.4" cy="32.2" r="1"/><circle cx="9" cy="39" r=".7"/><circle cx="8.2" cy="45" r=".7"/><circle cx="45.4" cy="44" r="1.2"/></g>
<path d="M16.2 53.5 L18.2 45.6 L25.6 42.8 H33.3 L39.6 45.6 L41.2 53.5 L36 56 H22Z" fill="#f6f3f2"/>
<path d="M26 38 h5 v7 l-2.5 3 l-2.5 -3z" fill="#f1ddd6"/>
<path d="M18.6 45.4 L25.8 42.6 L29 52 L33 42.6 L39.4 45.4 L30.5 55 H27.5 Z" fill="#232c47"/>
<path d="M24.8 43.4 L28.9 52.4 L33.8 43.4 Z" fill="#f6f3f2"/><path d="M26.6 42.6 L28.9 48 L31.4 42.6 Z" fill="#f1ddd6"/>
<ellipse cx="28.3" cy="29.6" rx="8.7" ry="10" fill="#3b3735"/>
<path d="M20 30 C19.6 36 21.6 39 23.4 40 L24 34Z" fill="#3b3735"/><path d="M36.8 30 C37 36 35 39 33.4 40 L33 34Z" fill="#3b3735"/>
<path d="M22.2 30.5 C22.2 27.5 34.6 27.5 34.6 30.5 C34.8 36.5 32 40.4 28.4 40.4 C24.8 40.4 22 36.5 22.2 30.5Z" fill="#f5e6e1"/>
<path d="M21.6 31.5 C22 27 25 25.4 28.6 25.4 C32 25.4 34.8 27 35.2 31.5 C33 29.6 31 29 28.6 29.4 L27.6 31 L26.6 29.4 C24.6 29.4 23 30 21.6 31.5Z" fill="#3b3735"/>
<ellipse cx="25.3" cy="33.4" rx="1" ry="1.1" fill="#4a3030"/><ellipse cx="31.6" cy="33.4" rx="1" ry="1.1" fill="#4a3030"/>
<path d="M26.8 37.2 q1.7 1.5 3.4 0z" fill="#d8607a"/>
</g>
</svg></div>
<div class="tag"><svg width="16" height="18" viewBox="0 0 16 18"><use href="#micoff"/></svg>赖铭洋</div>
</div>

<!-- tile 6 -->
<div class="tile" style="top:725px">
<div class="av" style="top:22.5px"><svg width="56" height="56" viewBox="0 0 56 56">
<defs><filter id="b6"><feGaussianBlur stdDeviation="0.7"/></filter></defs>
<rect width="56" height="56" fill="#f3f5f9"/>
<g filter="url(#b6)">
<path d="M29 -1 L50 -1 L50 9 C46 8.5 42 11 39 11.5 C36 8 32 4 29 -1Z" fill="#4aa0de"/>
<path d="M2 14.5 C8 11.6 14 12 19 13 C26 12 32 12.8 36 12 C40 11 43 12 46 12.6 L45 15 C40 15 36 16 30 16.4 C24 16.8 18 17.8 12 17 C8 17 5 18 2 19Z" fill="#4a9bdb"/>
<path d="M8 17.5 C11 17 15 18.6 17 20 L16.6 21.6 C13 21.6 10 20 7 18.6Z" fill="#4f9fdc"/>
<ellipse cx="24" cy="9" rx="13" ry="5" fill="#fbfcfe"/>
<path d="M-1 35 C4 33 9 31.4 14 31 C22 30.4 30 30 38 27 C44 25 50 23 57 21.5 V50 H-1Z" fill="#3f8d3c"/>
<path d="M-1 35 C4 33 9 31.4 14 31 L20 30.8 C14 33 8 35 2 38Z" fill="#2f6f4c"/>
<path d="M20 36 C28 33 38 30 50 28 C44 32 36 36 26 40Z" fill="#58a845"/>
<path d="M40 36 C46 33 52 31 56 30 V40 C50 42 44 42 40 42Z" fill="#357f34"/>
<path d="M8 47 C20 46 40 46.4 50 46 L47 52 L30 57 L14 53Z" fill="#b4cf3c"/>
<path d="M8 47 L50 46 L50 44.5 L8 45.5Z" fill="#3a7a32"/>
<rect x="29" y="42" width="2.4" height="5" fill="#7f9fc6"/><rect x="29.3" y="46.5" width="2" height="6.6" fill="#4c7fb6"/>
<ellipse cx="30.2" cy="40.6" rx="1.8" ry="1" fill="#d6b878"/><rect x="29.2" y="40.8" width="2" height="2" fill="#3a2c28"/>
<rect x="31.6" y="42.6" width="1.4" height="3" fill="#b98a5a"/>
</g>
</svg></div>
<div class="tag"><svg width="16" height="18" viewBox="0 0 16 18"><use href="#micoff"/></svg>白娇</div>
</div>

<div id="btag"><svg width="16" height="16" viewBox="0 0 16 16" style="left:-1px;top:5.4px"><rect x="0" y="0" width="16" height="10.4" rx="1.5" fill="#fff"/><rect x="4" y="12.6" width="8.8" height="2.3" rx="1" fill="#fff"/><path d="M5.2 8 C5.4 5.2 7.2 4.1 9.4 4.1 V2.2 L12.8 5.2 L9.4 8 V6.2 C7.6 6.1 6.2 6.6 5.2 8Z" fill="#131416"/></svg><svg width="16" height="18" viewBox="0 0 14 16" style="left:20px;top:5.2px"><g><rect x="3.2" y="0" width="7.4" height="9.4" rx="3.7" fill="#fff"/><path d="M0.8 6.5 C0.8 10.4 3.5 11.8 6.9 11.8 C10.3 11.8 13 10.4 13 6.5" fill="none" stroke="#fff" stroke-width="1.5" stroke-linecap="round"/><path d="M6.9 11.8 V14" stroke="#fff" stroke-width="1.8"/></g></svg>ZhangJilin的屏幕共享</div>
<div id="bot"><i></i></div>
</body>
</html>
